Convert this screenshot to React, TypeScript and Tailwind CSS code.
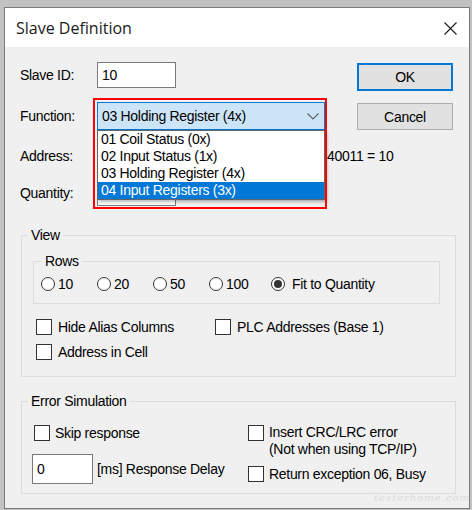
import React from "react";

function Radio({ checked = false }: { checked?: boolean }) {
  return (
    <span className="w-[14px] h-[14px] shrink-0 rounded-full border border-[#333333] bg-white flex items-center justify-center">
      {checked && <span className="w-[8px] h-[8px] rounded-full bg-[#333333]" />}
    </span>
  );
}

function Box() {
  return <span className="w-[16px] h-[16px] shrink-0 border border-[#333333] bg-white" />;
}

function RadioItem({ label, w, checked = false, gap = "ml-[3px]" }: { label: string; w: string; checked?: boolean; gap?: string }) {
  return (
    <div className={`flex items-center ${w}`}>
      <Radio checked={checked} />
      <span className={gap}>{label}</span>
    </div>
  );
}

export default function App() {
  return (
    <div className="w-[472px] h-[510px] overflow-hidden bg-[#c2c2c2] relative font-['Liberation_Sans',Arial,sans-serif] text-[14px] leading-[16px] tracking-[-0.3px] text-black">
      <div className="pt-[7px] pl-[4px]">
        <div className="w-[466px] h-[502px] border border-[#7a7a7a] flex flex-col bg-[#f0f0f0]">
          {/* Title bar */}
          <div className="h-[39px] shrink-0 bg-white flex items-center justify-between pl-[11px] pr-[12px]">
            <span className="font-['Open_Sans',sans-serif] text-[16px] tracking-normal text-[#1a1a1a]">Slave Definition</span>
            <svg width="13" height="13" viewBox="0 0 13 13" className="mt-[1px]">
              <path d="M0.5 0.5 L12.5 12.5 M12.5 0.5 L0.5 12.5" stroke="#1a1a1a" strokeWidth="1.1" fill="none" />
            </svg>
          </div>

          {/* Body */}
          <div className="flex-1 flex flex-col">
            {/* top section */}
            <div className="flex">
              <div className="w-[352px] shrink-0 pl-[15px] pt-[15px] flex flex-col">
                <div className="flex items-center h-[26px]">
                  <span className="w-[77px]">Slave ID:</span>
                  <div className="w-[79px] h-[26px] border border-[#7a7a7a] bg-white flex items-center pl-[4px]">10</div>
                </div>
                <div className="flex items-center h-[28px] mt-[14px]">
                  <span className="w-[77px]">Function:</span>
                  <div className="relative w-[228px] h-[28px]">
                    <div className="w-[228px] h-[28px] border border-[#0078d7] bg-[#cce4f7] flex items-center justify-between pl-[4px] pr-[5px]">
                      <span>03 Holding Register (4x)</span>
                      <svg width="12" height="7" viewBox="0 0 12 7">
                        <path d="M0.5 0.5 L6 6 L11.5 0.5" stroke="#606060" strokeWidth="1.1" fill="none" />
                      </svg>
                    </div>
                    <div className="absolute left-0 top-[28px] w-[228px] border border-[#646464] bg-white z-10 shadow-[2px_2px_3px_rgba(0,0,0,0.28)]">
                      <div className="h-[17px] leading-[17px] pl-[3px]">01 Coil Status (0x)</div>
                      <div className="h-[17px] leading-[17px] pl-[3px]">02 Input Status (1x)</div>
                      <div className="h-[17px] leading-[17px] pl-[3px]">03 Holding Register (4x)</div>
                      <div className="h-[17px] leading-[17px] pl-[3px] bg-[#0078d7] text-white">04 Input Registers (3x)</div>
                    </div>
                    <div className="absolute -left-[4px] -top-[4px] w-[234px] h-[111px] border-2 border-[#ff0000] z-20 pointer-events-none" />
                  </div>
                </div>
                <div className="flex items-center h-[26px] mt-[13px]">
                  <span className="w-[77px] shrink-0">Address:</span>
                  <div className="w-[79px] h-[26px] shrink-0 border border-[#7a7a7a] bg-white" />
                  <span className="ml-[151px] shrink-0 whitespace-nowrap">40011 = 10</span>
                </div>
                <div className="flex items-center h-[26px] mt-[11px]">
                  <span className="w-[77px]">Quantity:</span>
                  <div className="w-[79px] h-[26px] border border-[#7a7a7a] bg-white" />
                </div>
              </div>
              <div className="pt-[16px] flex flex-col">
                <div className="w-[96px] h-[28px] border-2 border-[#0078d7] bg-[#e1e1e1] flex items-center justify-center">OK</div>
                <div className="w-[96px] h-[27px] mt-[12px] border border-[#adadad] bg-[#e1e1e1] flex items-center justify-center">Cancel</div>
              </div>
            </div>

            {/* View group */}
            <fieldset className="ml-[16px] mt-[21px] w-[435px] h-[150px] border border-[#dcdcdc]">
              <legend className="ml-[6px] px-[3px] leading-[16px]">View</legend>
              <fieldset className="ml-[11px] mt-[10px] w-[407px] h-[51px] border border-[#dcdcdc]">
                <legend className="ml-[8px] px-[3px] leading-[16px]">Rows</legend>
                <div className="flex items-center h-[18px] mt-[6px] pl-[7px]">
                  <RadioItem label="10" w="w-[56px]" />
                  <RadioItem label="20" w="w-[56px]" />
                  <RadioItem label="50" w="w-[56px]" />
                  <RadioItem label="100" w="w-[62px]" />
                  <RadioItem label="Fit to Quantity" w="" checked gap="ml-[7px]" />
                </div>
              </fieldset>
              <div className="flex items-center h-[16px] mt-[15px] pl-[14px]">
                <div className="flex items-center w-[179px]">
                  <Box />
                  <span className="ml-[6px]">Hide Alias Columns</span>
                </div>
                <div className="flex items-center">
                  <Box />
                  <span className="ml-[6px]">PLC Addresses (Base 1)</span>
                </div>
              </div>
              <div className="flex items-center h-[16px] mt-[9px] pl-[14px]">
                <Box />
                <span className="ml-[6px]">Address in Cell</span>
              </div>
            </fieldset>

            {/* Error Simulation group */}
            <fieldset className="ml-[16px] mt-[16px] w-[435px] h-[101px] border border-[#dcdcdc]">
              <legend className="ml-[6px] px-[3px] leading-[16px]">Error Simulation</legend>
              <div className="flex">
                <div className="w-[226px] pl-[10px] flex flex-col">
                  <div className="flex items-center h-[16px] mt-[16px] ml-[2px]">
                    <Box />
                    <span className="ml-[5px]">Skip response</span>
                  </div>
                  <div className="flex items-center mt-[13px]">
                    <div className="w-[61px] h-[30px] border border-[#7a7a7a] bg-white flex items-center pl-[4px]">0</div>
                    <span className="ml-[4px]">[ms] Response Delay</span>
                  </div>
                </div>
                <div className="flex flex-col">
                  <div className="flex items-start mt-[16px]">
                    <Box />
                    <div className="ml-[5px] leading-[17px] -mt-[1px]">
                      <div>Insert CRC/LRC error</div>
                      <div>(Not when using TCP/IP)</div>
                    </div>
                  </div>
                  <div className="flex items-center h-[16px] mt-[8px]">
                    <Box />
                    <span className="ml-[5px]">Return exception 06, Busy</span>
                  </div>
                </div>
              </div>
            </fieldset>
          </div>
        </div>
      </div>
      <span className="absolute right-[2px] bottom-[4px] text-[10px] italic tracking-[1px] text-[#dadada] font-['DejaVu_Serif',serif]">testerhome.com</span>
    </div>
  );
}
